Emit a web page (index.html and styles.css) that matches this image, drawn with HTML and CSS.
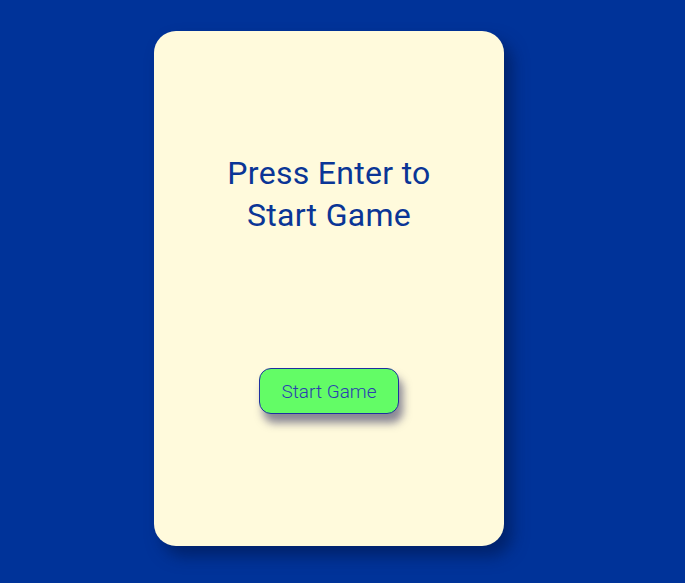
FILE: index.html
```html
<!DOCTYPE html>
<html>
<head>
<meta charset="utf-8">
<link rel="stylesheet" href="styles.css">
</head>
<body>
<div class="stage">
  <div class="card">
    <h1 class="title">Press Enter to<br>Start Game</h1>
    <button class="start-btn">Start Game</button>
  </div>
</div>
</body>
</html>
```

FILE: styles.css
```css
html, body {
  margin: 0;
  padding: 0;
  background: #003399;
  height: 100%;
}
.stage {
  padding: 31px 0 0 154px;
}
.card {
  box-sizing: border-box;
  width: 350px;
  height: 515px;
  background: #fffadc;
  border-radius: 22px;
  box-shadow: 8px 10px 16px rgba(0, 20, 70, 0.55);
  display: flex;
  flex-direction: column;
  align-items: center;
  padding-top: 121px;
}
.title {
  margin: 0;
  font-family: "Roboto", "Liberation Sans", sans-serif;
  font-weight: 400;
  font-size: 32px;
  line-height: 42px;
  color: #0a3596;
  text-align: center;
  letter-spacing: 0.3px;
}
.start-btn {
  margin-top: 132px;
  width: 140px;
  height: 46px;
  background: #63fc66;
  border: 1px solid #1f2fa0;
  border-radius: 12px;
  font-family: "Roboto", "Liberation Sans", sans-serif;
  font-size: 19px;
  font-weight: 300;
  color: #2a3fb0;
  box-shadow: 4px 9px 8px rgba(40, 40, 90, 0.55);
  padding: 0;
}
```
